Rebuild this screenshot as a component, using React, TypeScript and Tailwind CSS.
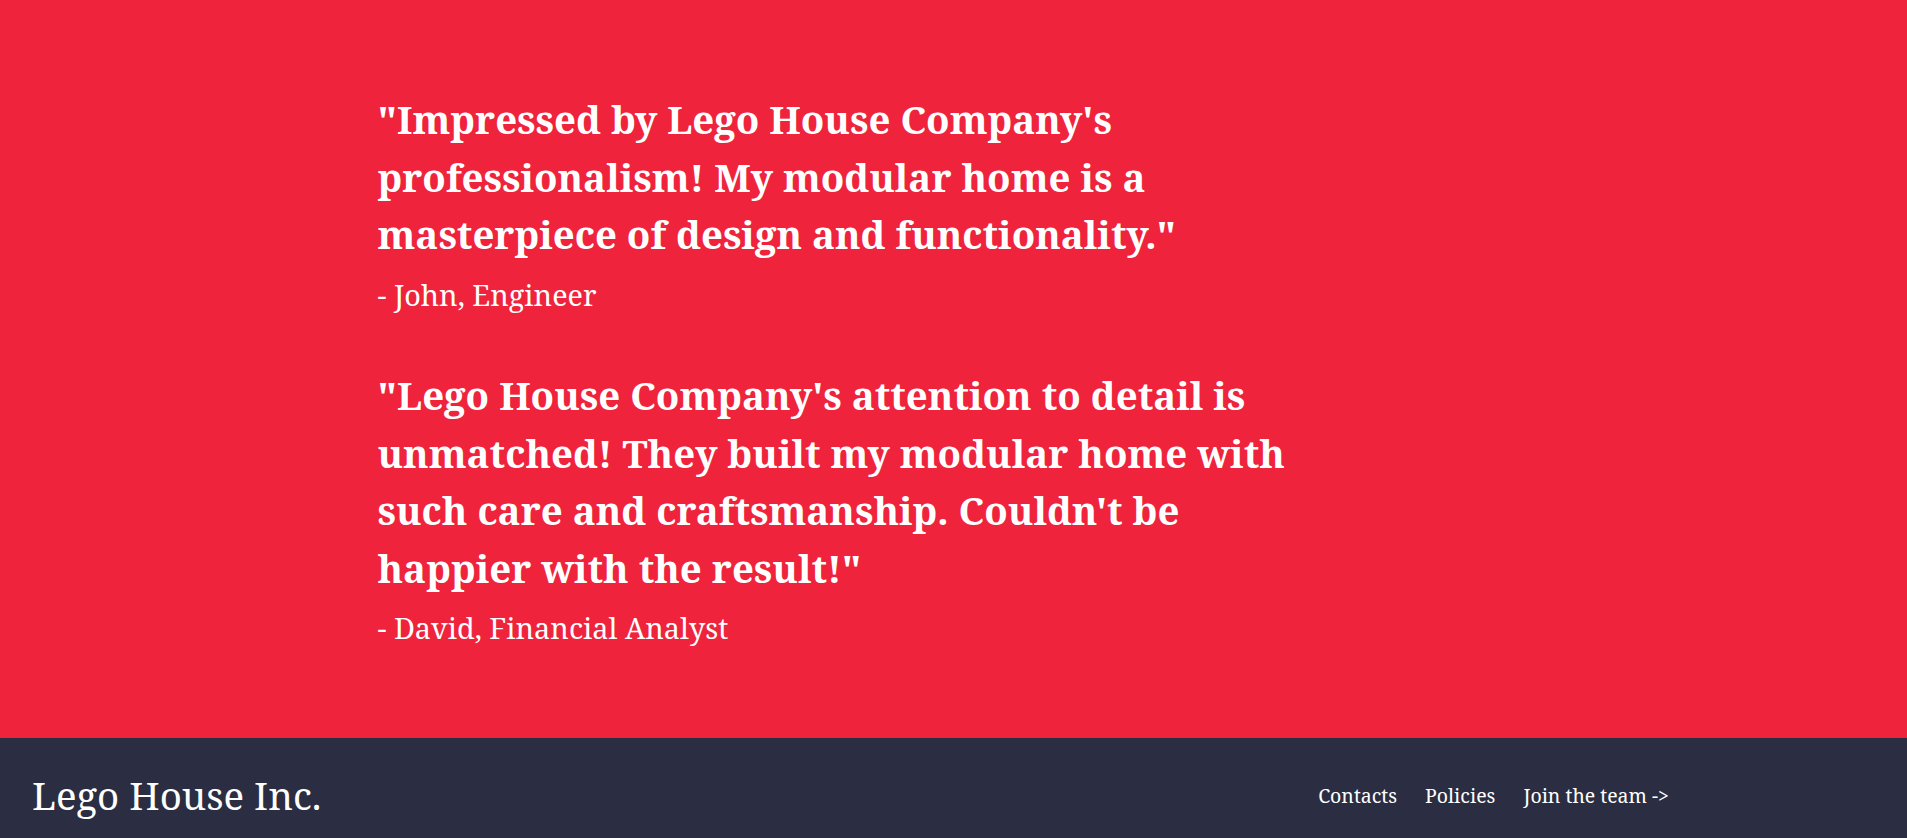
import React from "react";

const testimonials = [
  {
    quote:
      "\"Impressed by Lego House Company's professionalism! My modular home is a masterpiece of design and functionality.\"",
    author: "- John, Engineer",
  },
  {
    quote:
      "\"Lego House Company's attention to detail is unmatched! They built my modular home with such care and craftsmanship. Couldn't be happier with the result!\"",
    author: "- David, Financial Analyst",
  },
];

export default function App() {
  return (
    <div className="min-h-screen font-['Noto_Serif','Droid_Serif','DejaVu_Serif',serif] text-white">
      <section className="bg-[#EF233C] pt-[91px] pb-[88px]">
        <div className="max-w-6xl mx-auto flex flex-col gap-[51px]">
          {testimonials.map((t, i) => (
            <div key={i} className="max-w-[920px]">
              <p className="text-[38.4px] leading-[1.5] font-bold">{t.quote}</p>
              <p className="mt-[9px] text-[28.8px] leading-[1.5]">{t.author}</p>
            </div>
          ))}
        </div>
      </section>

      <footer className="bg-[#2B2D42] flex items-center justify-between pl-8 pr-[238px] py-[29px]">
        <h2 className="text-[38.4px] leading-[1.5]">Lego House Inc.</h2>
        <nav className="flex gap-[28px] text-[19.5px] leading-[1.5]">
          <a href="#">Contacts</a>
          <a href="#">Policies</a>
          <a href="#">Join the team -&gt;</a>
        </nav>
      </footer>
    </div>
  );
}
